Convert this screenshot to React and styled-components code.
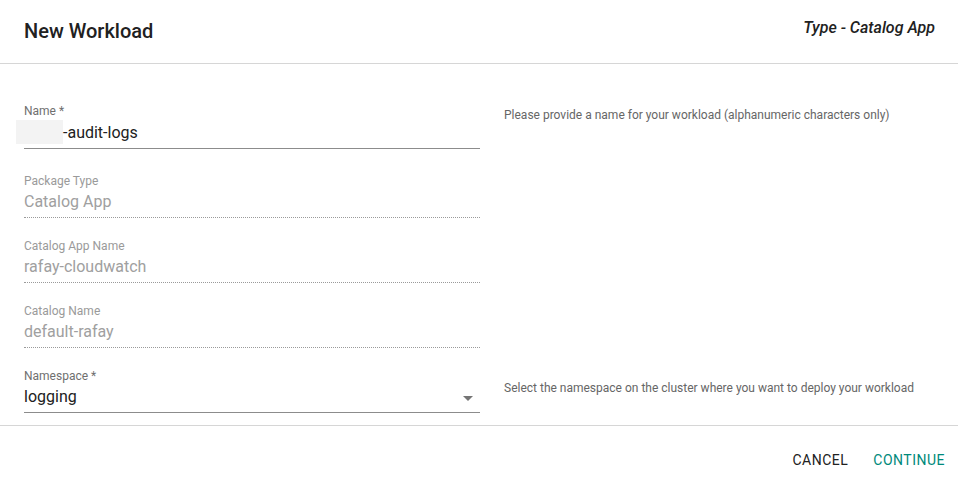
import React from 'react'
import styled, { createGlobalStyle } from 'styled-components'

const GlobalStyle = createGlobalStyle`
  html, body {
    margin: 0;
    padding: 0;
    background: #fff;
  }
  body {
    font-family: Roboto, "Liberation Sans", Arial, sans-serif;
    color: #212121;
  }
  * { box-sizing: border-box; }
`

const Dialog = styled.div`
  width: 958px;
  height: 484px;
  display: flex;
  flex-direction: column;
  background: #fff;
`

const Header = styled.header`
  height: 64px;
  display: flex;
  justify-content: space-between;
  align-items: flex-start;
  padding: 19px 23px 0 24px;
  border-bottom: 1px solid #d6d6d6;
`

const Title = styled.h2`
  margin: 0;
  font-size: 20px;
  font-weight: 500;
  line-height: 24px;
  color: #212121;
`

const TypeTag = styled.div`
  font-size: 16px;
  font-style: italic;
  font-weight: 500;
  line-height: 18px;
  color: #212121;
`

const Body = styled.div`
  flex: 1;
  display: flex;
  flex-direction: column;
  gap: 21px;
  padding: 40px 24px 0 24px;
  border-bottom: 1px solid #d6d6d6;
`

const Row = styled.div`
  display: grid;
  grid-template-columns: 456px 1fr;
  column-gap: 24px;
  margin-bottom: ${p => p.$extra || 0}px;
`

const Field = styled.div`
  display: flex;
  flex-direction: column;
`

const Label = styled.label`
  font-size: 12px;
  line-height: 14px;
  color: ${p => (p.$disabled ? '#9a9a9a' : '#6f6f6f')};
`

const Value = styled.div`
  position: relative;
  display: flex;
  align-items: center;
  font-size: 16px;
  line-height: 19px;
  height: ${p => (p.$tall ? 31 : 30)}px;
  padding: ${p => (p.$tall ? '5px 0 6px' : '4px 0 6px')};
  color: ${p => (p.$disabled ? '#a0a0a0' : '#212121')};
  border-bottom: 1px ${p => (p.$disabled ? 'dotted' : 'solid')} ${p => (p.$disabled ? '#9a9a9a' : '#8c8c8c')};
`

const Redacted = styled.span`
  display: inline-block;
  flex: none;
  width: 47px;
  height: 24px;
  margin: -3px 0 -2px -8px;
  background: #f3f3f3;
`

const Caret = styled.span`
  position: absolute;
  right: 7px;
  top: 13px;
  width: 0;
  height: 0;
  border-left: 5px solid transparent;
  border-right: 5px solid transparent;
  border-top: 5px solid #757575;
`

const Help = styled.p`
  margin: 0;
  padding-top: ${p => p.$offset || 0}px;
  font-size: 12px;
  line-height: 14px;
  color: #666;
`

const Footer = styled.footer`
  height: 58px;
  display: flex;
  justify-content: flex-end;
  align-items: flex-start;
  gap: 9px;
  padding: 18px 5px 0 0;
`

const Button = styled.button`
  border: 0;
  background: transparent;
  padding: 6px 8px;
  font-family: inherit;
  font-size: 14px;
  font-weight: 400;
  letter-spacing: 0.5px;
  line-height: 20px;
  text-transform: uppercase;
  cursor: pointer;
  color: ${p => (p.$primary ? '#00897b' : '#212121')};
`

const fields = [
  { label: 'Catalog App Name', value: 'rafay-cloudwatch' },
  { label: 'Catalog Name', value: 'default-rafay' },
]

export default function App() {
  return (
    <>
      <GlobalStyle />
      <Dialog>
        <Header>
          <Title>New Workload</Title>
          <TypeTag>Type - Catalog App</TypeTag>
        </Header>
        <Body>
          <Row $extra={4}>
            <Field>
              <Label>Name *</Label>
              <Value $tall>
                <Redacted />-audit-logs
              </Value>
            </Field>
            <Help $offset={4}>Please provide a name for your workload (alphanumeric characters only)</Help>
          </Row>
          <Row>
            <Field>
              <Label $disabled>Package Type</Label>
              <Value $disabled>Catalog App</Value>
            </Field>
          </Row>
          {fields.map(f => (
            <Row key={f.label}>
              <Field>
                <Label $disabled>{f.label}</Label>
                <Value $disabled>{f.value}</Value>
              </Field>
            </Row>
          ))}
          <Row>
            <Field>
              <Label>Namespace *</Label>
              <Value>
                logging
                <Caret />
              </Value>
            </Field>
            <Help $offset={12}>Select the namespace on the cluster where you want to deploy your workload</Help>
          </Row>
        </Body>
        <Footer>
          <Button>Cancel</Button>
          <Button $primary>Continue</Button>
        </Footer>
      </Dialog>
    </>
  )
}
